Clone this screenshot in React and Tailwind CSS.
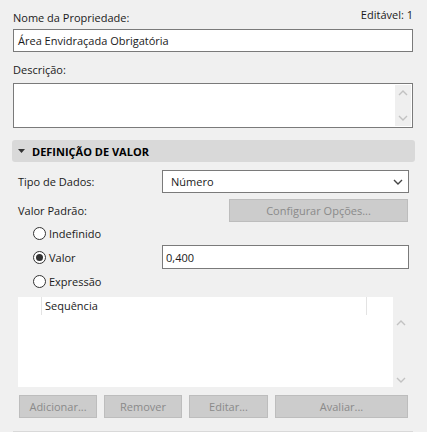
import { useState } from 'react';

const font = { fontFamily: '"Open Sans", "Noto Sans", sans-serif' };

function Chevron({ up = false, className = '' }) {
  return (
    <svg width="10" height="6" viewBox="0 0 10 6" className={className}>
      <polyline
        points={up ? '1,5 5,1 9,5' : '1,1 5,5 9,1'}
        fill="none"
        stroke="currentColor"
        strokeWidth="1.4"
      />
    </svg>
  );
}

function Radio({ label, checked, onSelect }) {
  return (
    <div className="flex items-center h-[24px] pl-[15px] cursor-default" onClick={onSelect}>
      <span className="w-[13px] h-[13px] rounded-full border border-[#333] bg-white flex items-center justify-center">
        {checked && <span className="w-[7px] h-[7px] rounded-full bg-[#333]" />}
      </span>
      <span className="ml-[3px]">{label}</span>
    </div>
  );
}

function GrayButton({ children, className = '' }) {
  return (
    <div
      className={`h-[23px] bg-[#cccccc] border border-[#bdbdbd] text-[#8a8a8a] flex items-center justify-center ${className}`}
    >
      {children}
    </div>
  );
}

export default function App() {
  const [mode, setMode] = useState('valor');

  return (
    <div
      className="w-[427px] h-[432px] bg-[#f0f0f0] overflow-hidden text-[11px] text-[#1a1a1a] leading-none"
      style={font}
    >
      <div className="pl-[13px] pr-[14px]">
        {/* nome */}
        <div className="flex justify-between items-start h-[29px]">
          <span className="mt-[12px]">Nome da Propriedade:</span>
          <span className="mt-[9px]">Editável: 1</span>
        </div>
        <div className="h-[23px] border border-[#7a7a7a] bg-white flex items-center px-[4px]">
          Área Envidraçada Obrigatória
        </div>

        {/* descrição */}
        <div className="h-[31px] pt-[12px]">Descrição:</div>
        <div className="h-[45px] border border-[#7a7a7a] bg-white flex justify-end p-[1px]">
          <div className="w-[16px] bg-[#efefef] flex flex-col items-center justify-between py-[5px] text-[#c2c2c2]">
            <Chevron up />
            <Chevron />
          </div>
        </div>
      </div>

      {/* definição de valor */}
      <div className="ml-[12px] mr-[12px] mt-[12px] h-[22px] rounded-[3px] bg-[#d9d9d9] flex items-center pl-[6px] font-bold text-[11px] text-black">
        <svg width="7" height="4" viewBox="0 0 7 4" className="mr-[7px]">
          <polygon points="0,0 7,0 3.5,4" fill="#333" />
        </svg>
        DEFINIÇÃO DE VALOR
      </div>

      <div className="pl-[18px] pr-[18px]">
        <div className="flex items-center justify-between mt-[8px] h-[23px]">
          <span>Tipo de Dados:</span>
          <div className="w-[247px] h-[23px] border border-[#7a7a7a] bg-white flex items-center justify-between pl-[8px] pr-[5px]">
            <span>Número</span>
            <Chevron className="text-[#444]" />
          </div>
        </div>

        <div className="flex items-center justify-between mt-[6px] h-[23px]">
          <span>Valor Padrão:</span>
          <GrayButton className="w-[179px] mr-[1px]">Configurar Opções...</GrayButton>
        </div>

        <div className="-mt-[1px]">
          <Radio label="Indefinido" checked={mode === 'indef'} onSelect={() => setMode('indef')} />
          <div className="flex items-center justify-between">
            <Radio label="Valor" checked={mode === 'valor'} onSelect={() => setMode('valor')} />
            <div className="w-[247px] h-[24px] border border-[#7a7a7a] bg-white flex items-center px-[3px]">
              0,400
            </div>
          </div>
          <Radio label="Expressão" checked={mode === 'expr'} onSelect={() => setMode('expr')} />
        </div>
      </div>

      {/* lista */}
      <div className="ml-[18px] mr-[19px] mt-[4px] flex h-[90px]">
        <div className="w-[375px] bg-white flex flex-col">
          <div className="flex h-[18px]">
            <div className="w-[24px] border-r border-[#e3e3e3]" />
            <div className="w-[325px] border-r border-[#e3e3e3] pl-[3px] pt-[3px]">Sequência</div>
          </div>
        </div>
        <div className="flex-1 flex flex-col items-center justify-between pt-[23px] pb-[4px] text-[#c2c2c2]">
          <Chevron up />
          <Chevron />
        </div>
      </div>

      <div className="ml-[19px] mr-[19px] mt-[8px] flex gap-[7px]">
        <GrayButton className="w-[78px]">Adicionar...</GrayButton>
        <GrayButton className="w-[78px]">Remover</GrayButton>
        <GrayButton className="w-[79px]">Editar...</GrayButton>
        <GrayButton className="flex-1">Avaliar...</GrayButton>
      </div>

      <div className="ml-[13px] mr-[14px] mt-[13px] h-[3px] bg-[#d9d9d9]" />
    </div>
  );
}
